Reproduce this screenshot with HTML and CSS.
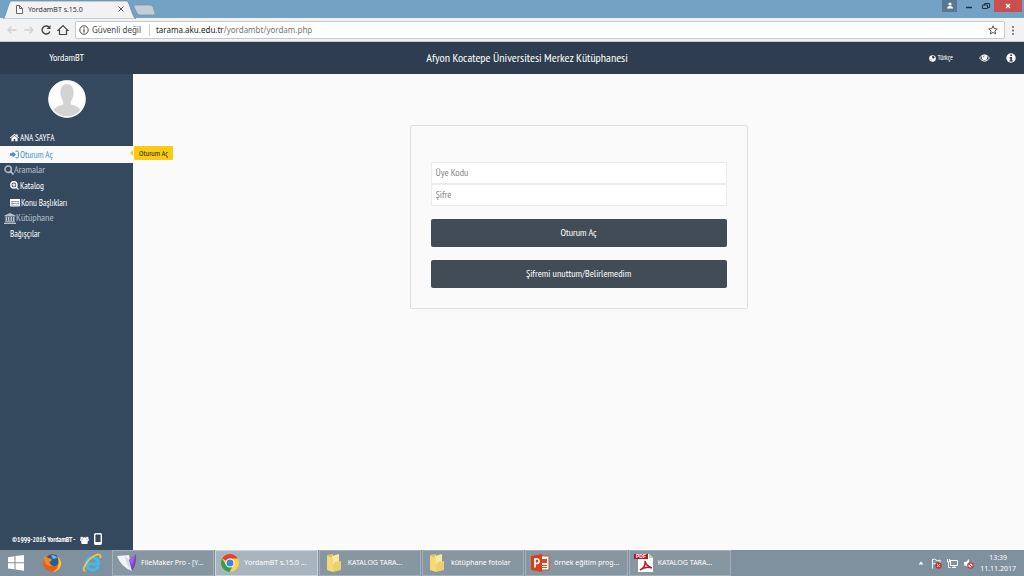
FILE: index.html
```html
<!DOCTYPE html>
<html lang="tr">
<head>
<meta charset="utf-8">
<meta name="viewport" content="width=device-width, initial-scale=1">
<title>YordamBT s.15.0</title>
<link rel="stylesheet" href="styles.css">
</head>
<body>
<div class="tabstrip">
  <svg class="tabs" width="160" height="19" viewBox="0 0 160 19" aria-hidden="true">
    <path d="M3 19C6 17 8 3 11 1H127C130 3 132 17 136 19Z" fill="#f2f2f2" stroke="#5f8bab" stroke-width=".7"/>
    <path d="M135 5H150Q152 5 153 7L155 13Q156 15 153 15H140Q138 15 137 13L134 7Q134 5 135 5Z" fill="#c3cdd6" stroke="#7593aa" stroke-width=".7"/>
    <path d="M16.500 5.500H19.500L22.500 8.500V13.500H16.500ZM19.500 5.500V8.500H22.500" fill="#fff" stroke="#666"/>
  </svg>
  <span class="tab-title">YordamBT s.15.0</span>
  <button class="tab-close" aria-label="Sekmeyi kapat"><svg width="6" height="6" viewBox="0 0 6 6"><path d="M.5.5l5 5M5.500.5l-5 5" stroke="#555"/></svg></button>
  <div class="window-buttons">
    <button class="win user" aria-label="Kullanıcı"><svg width="16" height="12" viewBox="0 0 16 12"><circle cx="8" cy="4" r="1.600" fill="#fff"/><path d="M5 8.500Q5 6 8 6T11 8.500Z" fill="#fff"/></svg></button>
    <button class="win" aria-label="Küçült"><svg width="16" height="12" viewBox="0 0 16 12"><path d="M5 7.500h6" stroke="#1d3447" stroke-width="1.500"/></svg></button>
    <button class="win" aria-label="Önceki boyut"><svg width="16" height="12" viewBox="0 0 16 12"><path d="M6.500 5V3.500h5v4H10M4.500 5h5v3.500h-5Z" fill="none" stroke="#1d3447"/></svg></button>
    <button class="win close" aria-label="Kapat"><svg width="16" height="12" viewBox="0 0 16 12"><path d="M6 4l4 4M10 4l-4 4" stroke="#fff" stroke-width="1.300"/></svg></button>
  </div>
</div>
<div class="toolbar">
  <div class="nav-buttons">
    <button aria-label="Geri"><svg width="12" height="12" viewBox="0 0 12 12"><path d="M10.500 6H2M5.500 2.500L2 6l3.500 3.500" fill="none" stroke="#cfcfcf" stroke-width="1.300"/></svg></button>
    <button aria-label="İleri"><svg width="12" height="12" viewBox="0 0 12 12"><path d="M1.500 6H10M6.500 2.500L10 6 6.500 9.500" fill="none" stroke="#cfcfcf" stroke-width="1.300"/></svg></button>
    <button aria-label="Yenile"><svg width="12" height="12" viewBox="0 0 12 12"><path d="M9.800 7.500A4 4 0 1 1 9 3.200" fill="none" stroke="#444" stroke-width="1.400"/><path d="M10.500 1V5H6.500Z" fill="#444"/></svg></button>
    <button aria-label="Ana sayfa"><svg width="12" height="12" viewBox="0 0 12 12"><path d="M1 6.500L6 1.500l5 5H9.500v4h-7v-4Z" fill="none" stroke="#444" stroke-width="1.200"/></svg></button>
  </div>
  <div class="address">
    <svg width="10" height="10" viewBox="0 0 10 10" aria-hidden="true"><circle cx="5" cy="5" r="4.200" fill="none" stroke="#444"/><path d="M5 4.300V7.500M5 2.300v1.200" stroke="#444" stroke-width="1.200"/></svg>
    <span class="secure">Güvenli değil</span>
    <span class="url">tarama.aku.edu.tr<span class="path">/yordambt/yordam.php</span></span>
    <svg class="star" width="10" height="10" viewBox="0 0 10 10" aria-hidden="true"><path d="M5 .8l1.200 2.900 3.100.2L6.900 6l.8 3L5 7.400 2.300 9l.8-3L.7 3.900l3.100-.2Z" fill="none" stroke="#555"/></svg>
  </div>
  <button class="more" aria-label="Menü"><svg width="4" height="12" viewBox="0 0 4 12"><circle cx="2" cy="3" r=".9" fill="#555"/><circle cx="2" cy="6.500" r=".9" fill="#555"/><circle cx="2" cy="10" r=".9" fill="#555"/></svg></button>
</div>

<header class="site-header">
  <a class="brand" href="#">YordamBT</a>
  <h1>Afyon Kocatepe Üniversitesi Merkez Kütüphanesi</h1>
  <div class="tools">
    <a class="lang" href="#"><svg width="7" height="7" viewBox="0 0 8 8" aria-hidden="true"><circle cx="4" cy="4" r="3.800" fill="#fff"/><path d="M3.500 1.200L6 1.500 6.500 3 5 4.200 3.500 3ZM1.500 4.500l1.500.8-.3 1Z" fill="#2e3e50"/></svg>Türkçe</a>
    <a href="#" aria-label="Görünüm"><svg width="11" height="8" viewBox="0 0 11 8"><path d="M.5 4Q5.500-2.500 10.500 4Q5.500 10.500 .5 4Z" fill="none" stroke="#fff"/><circle cx="5.500" cy="3.600" r="2.700" fill="#fff"/><path d="M4 3.500Q4.200 2 5.500 2" fill="none" stroke="#2e3e50" stroke-width=".7"/></svg></a>
    <a href="#" aria-label="Bilgi"><svg width="10" height="10" viewBox="0 0 10 10"><circle cx="5" cy="5" r="4.700" fill="#fff"/><path d="M4.200 1.500h1.800v1.500H4.200ZM3.500 4H6v3.200h.8v1.200H3.500V7.200h.8V5.200h-.8Z" fill="#2e3e50"/></svg></a>
  </div>
</header>

<div class="page">
  <nav class="sidebar">
    <svg class="avatar" width="38" height="38" viewBox="0 0 38 38" role="img" aria-label="Üye">
      <circle cx="19" cy="19" r="18.500" fill="#fff"/>
      <path d="M5 30Q8 26 15 24.500Q16 22 14.300 20Q12.600 17.500 12.400 14Q12 4 19 4T25.600 14Q25.400 17.500 23.700 20Q22 22 23 24.500Q30 26 33 30Q28 37 19 37T5 30Z" fill="#d3d3d3"/>
      <circle cx="19" cy="19" r="18" fill="none" stroke="#f8f8f8" stroke-width="1.500"/>
    </svg>
    <a class="item" href="#"><svg width="9" height="9" viewBox="0 0 9 9"><path d="M0 4.600L4.500.7 6.300 2.200V1.200H7.600V3.400L9 4.600 8.400 5.200 4.500 2 .6 5.200ZM1.400 5.200L4.500 2.700 7.600 5.200V8.300H5.300V6H3.700V8.300H1.400Z"/></svg>ANA SAYFA</a>
    <a class="item active" href="#"><svg width="9" height="9" viewBox="0 0 9 9"><path d="M0 3.200H2.600V1.400L6 4.500 2.600 7.600V5.800H0Z"/><path d="M5.500 1.200H7.200Q8.400 1.200 8.400 2.400V6.600Q8.400 7.800 7.200 7.800H5.500" fill="none" stroke="#3d8fd6"/></svg>Oturum Aç<span class="tip">Oturum Aç</span></a>
    <h2 class="group"><svg width="10" height="10" viewBox="0 0 10 10"><circle cx="4.200" cy="4.200" r="3.200" fill="none" stroke="#b4c0cb" stroke-width="1.500"/><path d="M6.500 6.500L9.500 9.500" stroke="#b4c0cb" stroke-width="1.700"/></svg>Aramalar</h2>
    <a class="item" href="#"><svg width="9" height="9" viewBox="0 0 9 9"><circle cx="3.900" cy="3.900" r="3.100" fill="none" stroke="#fff" stroke-width="1.400"/><path d="M6 6L8.500 8.500M2.300 3.900h3.200M3.900 2.300v3.200" stroke="#fff" stroke-width="1.300"/></svg>Katalog</a>
    <a class="item" href="#"><svg width="10" height="9" viewBox="0 0 10 9"><path d="M.5 1.500h9v6.500h-9Z" fill="#fff" fill-opacity=".5" stroke="#fff"/><path d="M0 1h10v2H0ZM1.500 4h1v1h-1ZM3 4h5.500v1H3ZM1.500 6h1v1h-1ZM3 6h5.500v1H3Z"/></svg>Konu Başlıkları</a>
    <h2 class="group"><svg width="12" height="11" viewBox="0 0 12 11"><path d="M6 0L11.500 2.500V3.500H.5V2.500ZM1.500 4h1.700v4H1.500ZM4 4h1.500v4H4ZM6.500 4H8v4H6.500ZM8.800 4h1.700v4H8.800ZM1 8.300h10v1H1ZM0 9.700h12v1.300H0Z"/></svg>Kütüphane</h2>
    <a class="item" href="#">Bağışçılar</a>
    <p class="credit">©1999-2016 YordamBT -
      <svg width="9" height="8" viewBox="0 0 9 8" aria-hidden="true"><circle cx="1.700" cy="2" r="1.300"/><circle cx="7.300" cy="2" r="1.300"/><circle cx="4.500" cy="2.800" r="1.700"/><path d="M0 3.300h9v1.500H0ZM1.300 4.200h6.400V7q0 1-1 1H2.300q-1 0-1-1Z"/></svg>
      <svg class="phone" width="8" height="12" viewBox="0 0 8 12" aria-hidden="true"><rect x=".7" y=".7" width="6.600" height="10.600" rx="1" fill="none" stroke="#fff" stroke-width="1.400"/><path d="M1 9h6v2H1Z"/></svg>
    </p>
  </nav>
  <main class="content">
    <form class="login">
      <input type="text" placeholder="Üye Kodu" aria-label="Üye Kodu">
      <input type="password" placeholder="Şifre" aria-label="Şifre">
      <button type="button">Oturum Aç</button>
      <button type="button">Şifremi unuttum/Belirlemedim</button>
    </form>
  </main>
</div>

<footer class="taskbar">
  <button class="pin" aria-label="Başlat"><svg width="18" height="18" viewBox="0 0 18 18"><path d="M1 3.200L7.500 2.300V8.300H1ZM8.500 2.100L17 1V8.300H8.500ZM1 9.300H7.500V15.300L1 14.500ZM8.500 9.300H17V16.700L8.500 15.500Z" fill="#fff"/></svg></button>
  <button class="pin" aria-label="Firefox"><svg width="20" height="20" viewBox="0 0 20 20"><circle cx="10" cy="10" r="9" fill="#e2601c"/><path d="M5 4Q9 0 14 2Q17 4 17 9Q15 14 10 13Q5 12 5 8Z" fill="#255c9e"/><path d="M9 2Q14 2 15 5L11 6Z" fill="#6bb6e2"/><path d="M2 3Q4 3 6 5Q9 5 10 7L7.500 9Q8 12 11 12.500Q8 14 5 12Q1 9 2 3Z" fill="#ee8a25"/><path d="M15 3Q20 7 19 12Q17 19 10 19Q15 17 16 13Q17.500 8 15 3Z" fill="#ffc62f"/></svg></button>
  <button class="pin" aria-label="Internet Explorer"><svg width="20" height="20" viewBox="0 0 20 20"><path d="M16.500 13.200Q14.500 17 10.500 17Q4.500 16.500 4.500 10.500T10.500 4.500Q16.500 5 16.500 11H5.500" fill="none" stroke="#45b8ec" stroke-width="3.200"/><path d="M3.500 18Q0 18 3 12.500Q7 5 14 2Q19 0 18.500 5" fill="none" stroke="#f3c944" stroke-width="1.700"/></svg></button>
  <div class="tasks">
    <button class="task"><svg width="20" height="20" viewBox="0 0 20 20"><path d="M0 3L12 2 15 18Q4 14 0 3Z" fill="#f2f4fa"/><path d="M8 3L12 7 14 17Q9 12 8 3Z" fill="#d6daeb"/><path d="M12 7L19 1Q20 11 15 18Z" fill="#7745c4"/><path d="M12 7L19 1 15 12Z" fill="#9b67e0"/></svg><span>FileMaker Pro - [Y...</span></button>
    <button class="task current"><svg width="20" height="20" viewBox="0 0 20 20"><circle cx="10" cy="10" r="9" fill="#ffd43c"/><path d="M10 10L2.200 5.500A9 9 0 0 1 17.800 5.500H10Z" fill="#e34133"/><path d="M2.200 5.500A9 9 0 0 0 9.500 19L13.500 12 6 12Z" fill="#2f9f50"/><circle cx="10" cy="10" r="4.500" fill="#fff"/><circle cx="10" cy="10" r="3.500" fill="#4282e6"/></svg><span>YordamBT s.15.0 ...</span></button>
    <button class="task"><svg width="20" height="20" viewBox="0 0 20 20"><path d="M3 2L9 1V18L3 17Z" fill="#e5c35a"/><path d="M8 3L15 1V16L8 18Z" fill="#f8e8a4"/><path d="M3 3L9 5V19L3 17Z" fill="#f5d878"/><path d="M11 9L17 8V17L9 19V12Z" fill="#ecd06b"/></svg><span>KATALOG TARA...</span></button>
    <button class="task"><svg width="20" height="20" viewBox="0 0 20 20"><path d="M3 2L9 1V18L3 17Z" fill="#e5c35a"/><path d="M8 3L15 1V16L8 18Z" fill="#f8e8a4"/><path d="M3 3L9 5V19L3 17Z" fill="#f5d878"/><path d="M11 9L17 8V17L9 19V12Z" fill="#ecd06b"/></svg><span>kütüphane fotolar</span></button>
    <button class="task"><svg width="20" height="20" viewBox="0 0 20 20"><path d="M10 3h9v14h-9Z" fill="#fff" stroke="#d6492a"/><path d="M12 6h5v4h-5ZM12 12h5v1h-5ZM12 14h5v1h-5Z" fill="#d6492a"/><path d="M1 3L12 1V19L1 17Z" fill="#d4431f"/><path d="M5 14.500V6H7.200Q9 6 9 8.200T7 10.500H5" fill="none" stroke="#fff" stroke-width="1.700"/></svg><span>örnek eğitim prog...</span></button>
    <button class="task"><svg width="20" height="20" viewBox="0 0 20 20"><path d="M4 1H15L19 5V19H4Z" fill="#fff"/><path d="M15 1V5H19Z" fill="#ccc"/><path d="M6 17Q12 14 11 8Q12 13 18 15Q12 13 6 17Z" fill="none" stroke="#bd1e23" stroke-width="1.500"/><path d="M0 1H14V6H0Z" fill="#b5181e"/><text class="pdf" x="2" y="5">PDF</text></svg><span>KATALOG TARA...</span></button>
  </div>
  <div class="tray">
    <svg class="expand" width="6" height="4" viewBox="0 0 6 4" aria-hidden="true"><path d="M3 .5L5.500 3.500H.5Z" fill="#fff"/></svg>
    <svg width="11" height="11" viewBox="0 0 11 11" aria-hidden="true"><path d="M1.500 1v9.500M1.500 1.500Q4 .5 5 2T9 2V6Q7 7 5 6T1.500 6" fill="none" stroke="#fff"/><circle cx="7.500" cy="7.500" r="3.200" fill="#ce2f2f"/><path d="M6 6l3 3M9 6l-3 3" stroke="#fff"/></svg>
    <svg width="11" height="11" viewBox="0 0 11 11" aria-hidden="true"><path d="M3.500 2.500h7v5h-7ZM5 9.500h4M7 7.500v2M.5 1v3h2V1M1.500 4v5.500h2" fill="none" stroke="#fff"/></svg>
    <svg width="11" height="11" viewBox="0 0 11 11" aria-hidden="true"><path d="M1 4h2l3-3v9L3 7.500H1Z" fill="#fff"/><circle cx="7.500" cy="7.500" r="2.700" fill="#fff" stroke="#ce2f2f" stroke-width="1.200"/><path d="M5.800 5.800l3.400 3.400" stroke="#ce2f2f"/></svg>
    <p class="clock">13:39<br>11.11.2017</p>
  </div>
</footer>
</body>
</html>
```
FILE: styles.css
```css
* { box-sizing: border-box; }

body {
  margin: 0;
  min-height: 100vh;
  display: flex;
  flex-direction: column;
  background: #fafafa;
  font-family: "PT Sans Narrow", "Roboto Condensed", "Open Sans Condensed Light", "Open Sans Condensed", "Liberation Sans", sans-serif;
  font-size: 9px;
  line-height: 12px;
}

button, input { font: inherit; }
button { margin: 0; padding: 0; border: 0; background: none; color: inherit; }
a { color: inherit; text-decoration: none; }
h1, h2, p { margin: 0; font-weight: normal; }
svg { flex: none; display: block; }

.tabstrip, .toolbar, .taskbar { font-family: "Noto Sans", "Open Sans", sans-serif; }

.tabstrip {
  position: relative;
  height: 18px;
  display: flex;
  background: #74a2c4;
  color: #333;
  font-size: 7px;
}
.tabs { position: absolute; left: 0; top: 0; }
.tab-title { position: relative; margin-left: 28px; padding-top: 4px; width: 90px; }
.tab-close { position: relative; display: flex; align-items: center; }
.window-buttons { margin-left: auto; display: flex; align-items: flex-start; }
.win { width: 17px; height: 12px; display: flex; justify-content: center; }
.win.user { width: 15px; margin-right: 3px; background: #577792; }
.win.close { width: 28px; margin: 0 2px 0 0; background: #c8504f; }

.toolbar {
  height: 24px;
  display: flex;
  align-items: center;
  gap: 6px;
  padding: 0 9px 0 6px;
  background: #f2f2f2;
  border-bottom: 1px solid #c3c8cc;
  font-size: 8px;
}
.nav-buttons { display: flex; gap: 5px; }
.address {
  flex: 1;
  height: 18px;
  display: flex;
  align-items: center;
  gap: 3px;
  padding: 0 6px 0 3px;
  border: 1px solid #c9c9c9;
  border-radius: 2px;
  background: #fff;
  color: #444;
}
.secure { padding-right: 8px; border-right: 1px solid #ccc; }
.url { padding-left: 3px; color: #222; }
.path { color: #777; }
.star { margin-left: auto; }

.site-header {
  height: 32px;
  display: grid;
  grid-template-columns: 13% 1fr 13%;
  align-items: center;
  background: #2e3e50;
  color: #fff;
}
.brand { text-align: center; font-size: 10px; }
.site-header h1 { padding-left: 30px; text-align: center; font-size: 12px; }
.tools { display: flex; align-items: center; justify-content: flex-end; gap: 16px; padding-right: 8px; }
.lang { display: flex; align-items: center; gap: 1px; margin-right: 10px; font-size: 7px; }

.page { flex: 1; display: flex; }
.sidebar {
  width: 13%;
  display: flex;
  flex-direction: column;
  padding: 6px 0 3px;
  background: #34495e;
  color: #fff;
}
.avatar { align-self: center; margin-bottom: 11px; }
.item {
  position: relative;
  height: 17px;
  display: flex;
  align-items: center;
  gap: 1px;
  padding-left: 10px;
}
.item svg, .credit svg { fill: #fff; }
.item.active { background: #fafafa; color: #3d8fd6; }
.item.active svg { fill: #3d8fd6; }
.tip {
  position: absolute;
  left: calc(100% + 1px);
  top: 0;
  padding: 1px 5px;
  border-radius: 1px;
  background: #fbcb12;
  color: #222;
  font-size: 8px;
  white-space: nowrap;
}
.tip::before {
  content: "";
  position: absolute;
  left: -7px;
  top: 4px;
  border: 3px solid transparent;
  border-right-color: #fbcb12;
}
.group {
  height: 14px;
  display: flex;
  align-items: center;
  padding-left: 4px;
  color: #b4c0cb;
  font-size: 10px;
}
.group svg { fill: #b4c0cb; }
.credit {
  margin-top: auto;
  height: 14px;
  display: flex;
  align-items: center;
  gap: 5px;
  padding-left: 12px;
  font-size: 7px;
  font-weight: bold;
}
.phone { align-self: flex-start; }

.content { flex: 1; padding: 51px 16px 0; }
.login {
  max-width: 338px;
  margin: 0 auto;
  display: flex;
  flex-direction: column;
  padding: 36px 20px 20px;
  border: 1px solid #dedede;
  border-radius: 2px;
  font-size: 10px;
}
.login input {
  height: 22px;
  width: 100%;
  padding: 0 4px 1px;
  border: 1px solid #ececec;
  border-radius: 0;
  background: #fff;
}
.login input::placeholder { color: #858585; opacity: 1; }
.login button {
  height: 28px;
  margin-top: 13px;
  border-radius: 2px;
  background: #424c57;
  color: #fff;
}

.taskbar {
  height: 26px;
  display: flex;
  align-items: stretch;
  background: #7f909e;
  color: #fff;
  font-size: 7px;
}
.pin { width: 40px; display: flex; align-items: center; justify-content: center; }
.pin:first-child { width: 32px; }
.tasks { flex: 1; max-width: 619px; display: flex; gap: 1px; }
.task {
  flex: 1;
  min-width: 0;
  display: flex;
  align-items: center;
  gap: 4px;
  padding-left: 4px;
  border: 1px solid #a3b0b9;
  background: #8797a1;
  white-space: nowrap;
}
.task.current { background: #a9b5be; border-color: #ced5da; }
.pdf { font: bold 5px "Liberation Sans", sans-serif; fill: #fff; }
.tray { margin-left: auto; display: flex; align-items: center; gap: 5px; padding-right: 8px; }
.expand { margin-right: 2px; }
.clock { line-height: 11px; text-align: center; padding-left: 1px; }
```
